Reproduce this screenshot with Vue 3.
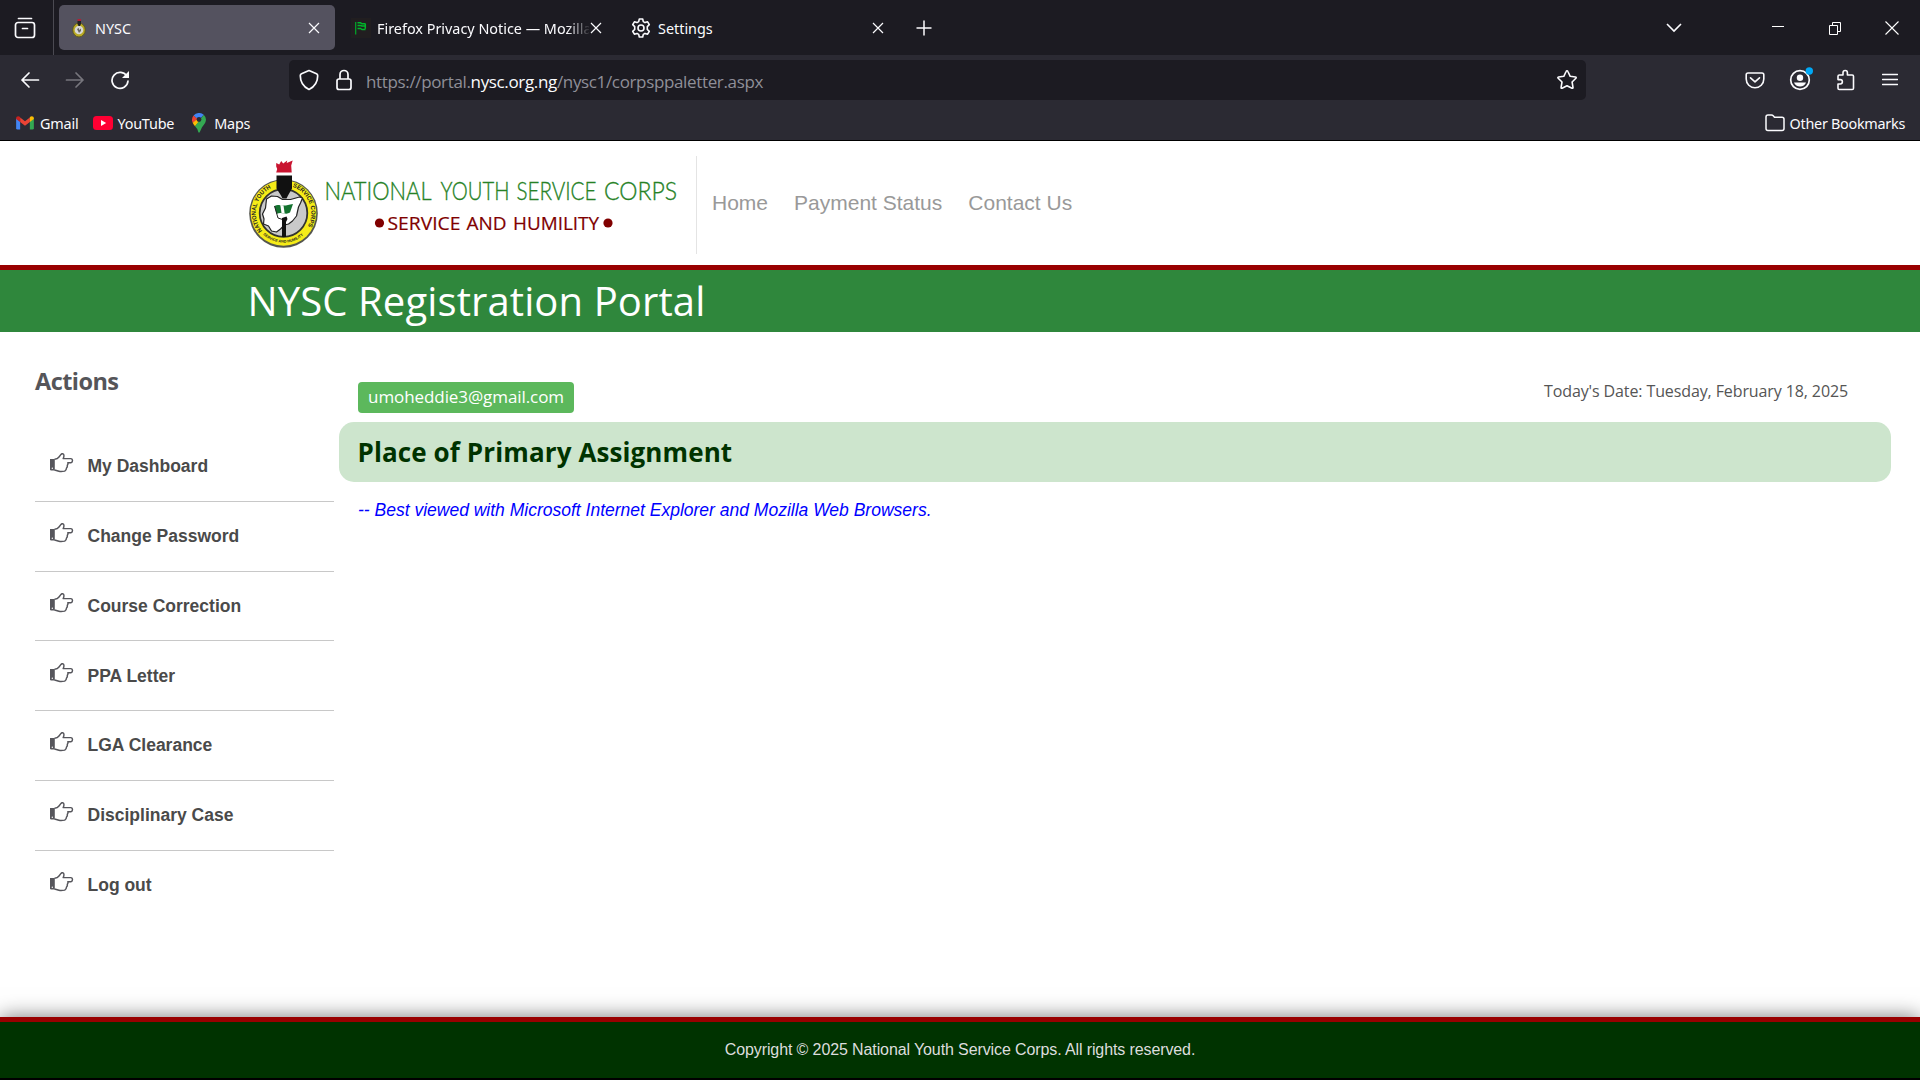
<script setup>
const actions = ['My Dashboard', 'Change Password', 'Course Correction', 'PPA Letter', 'LGA Clearance', 'Disciplinary Case', 'Log out']
const links = ['Home', 'Payment Status', 'Contact Us']
</script>

<template>
  <div class="screen">
    <div class="tabbar">
      <div class="view"><svg width="22" height="22" viewBox="0 0 22 22" fill="none" stroke="#fbfbfe" stroke-width="1.7" stroke-linecap="round"><path d="M4.500 1.500h13" /><rect x="1.500" y="5.500" width="19" height="15" rx="2.500" /><path d="M8.500 11.500h5" /></svg></div>
      <div class="tab active">
        <svg class="fav" width="16" height="20" viewBox="0 0 16 20"><ellipse cx="8" cy="12" rx="6.300" ry="7" fill="#b9aa25" stroke="#5d581f" /><circle cx="8" cy="12" r="4.300" fill="#d8d8d5" /><path d="M6.500 3h3.500v3l-1 2H7.500l-1-2z" fill="#222" /><path d="M6.500 1h3.500v2H6.500z" fill="#b21f35" /><path d="M6 11l2-1v2l2-1.500v2.500l-2 2z" fill="#666" /></svg>
        <span class="tt">NYSC</span>
        <svg class="x" width="12" height="12" viewBox="0 0 12 12"><path d="M1 1l10 10M11 1L1 11" /></svg>
      </div>
      <div class="tab second">
        <svg class="fav" width="20" height="20" viewBox="0 0 20 20"><path d="M0 0h20v20H0z" fill="#211e20" /><path d="M4.700 4v12.500" stroke="#00a82a" stroke-width="1.200" /><path d="M6.500 4.800h3l1.500 1h3.500M6.500 7.500h3l1.500.5h3M6.500 10.500h3l1.500 1h3.500M14.300 5.800v5" fill="none" stroke="#00b52a" stroke-width="1.500" /></svg>
        <span class="tt fade">Firefox Privacy Notice — Mozilla</span>
        <svg class="x" width="12" height="12" viewBox="0 0 12 12"><path d="M1 1l10 10M11 1L1 11" /></svg>
      </div>
      <div class="tab third">
        <svg class="fav" width="20" height="20" viewBox="0 0 20 20" fill="none" stroke="#fbfbfe" stroke-width="1.600" stroke-linejoin="round"><path d="M8.300 1h3.400l.6 2.600 1.700 1 2.600-.8 1.700 2.900-2 1.900v2.800l2 1.900-1.700 2.900-2.600-.8-1.700 1-.6 2.600H8.300l-.6-2.600-1.700-1-2.600.8-1.700-2.900 2-1.900V8.600l-2-1.900 1.700-2.900 2.600.8 1.700-1z" /><circle cx="10" cy="10" r="3" /></svg>
        <span class="tt">Settings</span>
        <svg class="x" width="12" height="12" viewBox="0 0 12 12"><path d="M1 1l10 10M11 1L1 11" /></svg>
      </div>
      <svg class="plus" width="16" height="16" viewBox="0 0 16 16"><path d="M8 .5v15M.5 8h15" stroke="#fbfbfe" stroke-width="1.500" /></svg>
      <svg class="chev" width="18" height="12" viewBox="0 0 18 12"><path d="M2 2l7 7 7-7" fill="none" stroke="#fbfbfe" stroke-width="1.600" /></svg>
      <div class="win">
        <svg width="14" height="14" viewBox="0 0 14 14"><path d="M1 5.500h12" stroke="#fff" /></svg>
        <svg width="14" height="14" viewBox="0 0 14 14" fill="none" stroke="#fff"><path d="M1.500 4.500h8v9h-8zM4.500 4.500v-3h8v9h-3" /></svg>
        <svg width="14" height="14" viewBox="0 0 14 14"><path d="M.5.500l13 13M13.500.500l-13 13" stroke="#fff" stroke-width="1.100" /></svg>
      </div>
    </div>
    <div class="toolbar">
      <svg class="back" width="20" height="18" viewBox="0 0 20 18"><path d="M18.500 9H2M9 2L2 9l7 7" fill="none" stroke="#fbfbfe" stroke-width="1.700" stroke-linecap="round" stroke-linejoin="round" /></svg>
      <svg class="fwd" width="20" height="18" viewBox="0 0 20 18"><path d="M1.500 9H18M11 2l7 7-7 7" fill="none" stroke="#77767d" stroke-width="1.700" stroke-linecap="round" stroke-linejoin="round" /></svg>
      <svg class="rel" width="20" height="20" viewBox="0 0 20 20"><path d="M17 6.500A8 8 0 1 0 18 11" fill="none" stroke="#fbfbfe" stroke-width="1.700" stroke-linecap="round" /><path d="M19 1v7h-7z" fill="#fbfbfe" /></svg>
      <div class="url">
        <svg width="20" height="22" viewBox="0 0 20 22"><path d="M10 1.500l7.500 3.200q1.200.5 1.200 2C18.700 14 15 18 10 20.500 5 18 1.300 14 1.300 6.700q0-1.500 1.200-2z" fill="none" stroke="#fbfbfe" stroke-width="1.700" stroke-linejoin="round" /></svg>
        <svg class="lock" width="16" height="22" viewBox="0 0 16 22"><path d="M4 10V5.500a4 4 0 0 1 8 0V10" fill="none" stroke="#fbfbfe" stroke-width="1.700" /><rect x="1" y="10" width="14" height="10.500" rx="2" fill="none" stroke="#fbfbfe" stroke-width="1.700" /></svg>
        <span class="addr">https://portal.<b>nysc.org.ng</b>/nysc1/corpsppaletter.aspx</span>
        <svg class="star" width="22" height="22" viewBox="0 0 22 22"><path d="M11 1.800q.6 0 .9.700l2.300 4.800 5.200.7q1.300.3.500 1.300l-3.800 3.700.9 5.300q.1 1.300-1 .9L11 16.700l-4.900 2.500q-1.200.4-1-.9l.9-5.300L2.200 9.300Q1.300 8.300 2.600 8l5.200-.7 2.300-4.800q.3-.7.900-.7z" fill="none" stroke="#fbfbfe" stroke-width="1.600" stroke-linejoin="round" /></svg>
      </div>
      <div class="tools">
        <svg width="22" height="22" viewBox="0 0 22 22" fill="none" stroke="#fbfbfe" stroke-width="1.600" stroke-linecap="round" stroke-linejoin="round"><path d="M4 4h14q1.800 0 1.800 1.800V10a8.800 8.800 0 0 1-17.600 0V5.800Q2.200 4 4 4z" /><path d="M6.500 8.800l4.500 4 4.500-4" /></svg>
        <svg width="26" height="26" viewBox="0 0 26 26"><circle cx="13" cy="13" r="9.300" fill="none" stroke="#fbfbfe" stroke-width="1.700" /><circle cx="13" cy="10.800" r="3.200" fill="#fbfbfe" /><path d="M7 15.500h12q-1.600 4-6 4t-6-4z" fill="#fbfbfe" /><circle cx="22.300" cy="4" r="3.700" fill="#00a8f5" /></svg>
        <svg class="ext" width="20" height="22" viewBox="0 0 20 22"><path d="M7 6V3.700a2.200 2.200 0 0 1 4.400 0V6h4.800q1.300 0 1.300 1.300v11.900q0 1.300-1.300 1.300H3.300Q2 20.500 2 19.200V15h2.200a2.200 2.200 0 0 0 0-4.400H2V7.300Q2 6 3.300 6z" fill="none" stroke="#fbfbfe" stroke-width="1.600" stroke-linejoin="round" /></svg>
        <svg class="menu" width="16" height="14" viewBox="0 0 16 14"><path d="M.5 1.500h15M.5 6.500h15M.5 11.500h15" stroke="#fbfbfe" stroke-width="1.500" stroke-linecap="round" /></svg>
      </div>
    </div>
    <div class="bookmarks">
      <div class="bm gmail">
        <svg width="18" height="14" viewBox="0 0 19 15"><path d="M0 2.500L4.300 6v8.500H1.500Q0 14.500 0 13z" fill="#4285f4" /><path d="M14.700 6L19 2.500V13q0 1.500-1.500 1.500h-2.800z" fill="#34a853" /><path d="M4.300 1.500l5.200 4 5.200-4V6.500l-5.200 4-5.200-4z" fill="#ea4335" /><path d="M0 2.500C0 .2 2.500-.4 4.300 1.200v5.200L0 3.200z" fill="#c5221f" /><path d="M19 2.500c0-2.300-2.500-2.900-4.300-1.300v5.200L19 3.200z" fill="#fbbc04" /></svg>
        <span>Gmail</span>
      </div>
      <div class="bm youtube">
        <svg width="20" height="14" viewBox="0 0 20 14"><rect width="20" height="14" rx="3.500" fill="#ff0033" /><path d="M8 4l5.200 3L8 10z" fill="#fff" /></svg>
        <span>YouTube</span>
      </div>
      <div class="bm maps">
        <svg width="14" height="20" viewBox="0 0 14 20"><path d="M1.600 2.500A7 7 0 0 0 .7 9.800L7 7z" fill="#ea4335" /><path d="M.7 9.800q.8 1.800 2.300 3.500L9 7 7 5z" fill="#fbbc04" /><path d="M11.700 1.800q3.600 3.500 1.500 8-1.200 2-3.200 4.500L7.800 19q-.8 1.500-1.500 0-.8-3.500-3.300-5.700z" fill="#34a853" /><path d="M1.600 2.500A7 7 0 0 1 11.700 1.800L7 7z" fill="#4285f4" /><circle cx="7" cy="6.500" r="2.400" fill="#2b2a33" /></svg>
        <span>Maps</span>
      </div>
      <div class="bm other">
        <svg width="20" height="18" viewBox="0 0 20 18"><path d="M1 14.500V3Q1 1 3 1h3.500q1 0 1.700.8L9.500 3.300H17q2 0 2 2v9.200q0 2-2 2H3q-2 0-2-2z" fill="none" stroke="#fbfbfe" stroke-width="1.500" /></svg>
        <span>Other Bookmarks</span>
      </div>
    </div>
    <header class="head">
      <svg class="logo" width="440" height="100" viewBox="246 156 440 100">
        <circle cx="283.500" cy="213.500" r="34.300" fill="#55564f" />
        <circle cx="283.500" cy="213" r="32.800" fill="#f6ec18" />
        <circle cx="283.500" cy="213" r="23.800" fill="#c9c9c9" stroke="#33332f" stroke-width="1.800" />
        <path id="ringLeft" d="M262.300 230.800A27.700 27.700 0 0 1 275 186.600" fill="none" />
        <path id="ringRight" d="M292.500 186.800A27.700 27.700 0 0 1 304.700 230.800" fill="none" />
        <path id="ringLow" d="M261 232.500A30 30 0 0 0 306 232.500" fill="none" />
        <text class="ringt"><textPath href="#ringLeft" textLength="50" lengthAdjust="spacingAndGlyphs">NATIONAL YOUTH</textPath></text>
        <text class="ringt"><textPath href="#ringRight" textLength="48" lengthAdjust="spacingAndGlyphs">SERVICE CORPS</textPath></text>
        <text class="ringt low"><textPath href="#ringLow" startOffset="3" textLength="44" lengthAdjust="spacingAndGlyphs">SERVICE AND HUMILITY</textPath></text>
        <path d="M266.500 199l5-3 6 .5 5 3 8 0 9-2.500 3 1-2 5-2 4-2 9-4 5-4 3-4 1-4 4-4 3-5-1-3-5-5-2 .5-5-1.500-5 3-6z" fill="#fff" stroke="#222" stroke-width="1.200" stroke-linejoin="round" />
        <path d="M274.500 206q2.500-1.500 4.500-1t4.500.5 4.500-.5 5-1l-3 8.500q-2.500 1.500-5 1t-4.500-.5-4 1z" fill="#14722f" />
        <path d="M280.300 205l3.200.5 1.200 8-3.200-.5z" fill="#fff" />
        <path d="M274.500 206l3.500 12 6 2" fill="none" stroke="#222" />
        <path d="M282 218l4.500-1.500 1 2.500-1.500 3V237h-4v-15z" fill="#111" />
        <path d="M276.500 175.500h15.500v13l-4 7-1.500 3h-4l-1.500-3-4.500-7z" fill="#111" />
        <path d="M276.200 163l3 1.500 2-3.500 2 2.500 4-3-.5 2.500 6-2.500-1.500 5 .5 7h-15.500l1-3.500-1-2.500z" fill="#c91430" />
        <text class="name" y="200"><tspan x="324.500" textLength="107" lengthAdjust="spacingAndGlyphs">NATIONAL</tspan><tspan x="440.500" textLength="69" lengthAdjust="spacingAndGlyphs">YOUTH</tspan><tspan x="516.500" textLength="80" lengthAdjust="spacingAndGlyphs">SERVICE</tspan><tspan x="604" textLength="73" lengthAdjust="spacingAndGlyphs">CORPS</tspan></text>
        <circle cx="379.500" cy="223" r="4.600" fill="#800000" />
        <text class="motto" y="230"><tspan x="387.500" textLength="73" lengthAdjust="spacingAndGlyphs">SERVICE</tspan><tspan x="466.500" textLength="40" lengthAdjust="spacingAndGlyphs">AND</tspan><tspan x="513" textLength="86" lengthAdjust="spacingAndGlyphs">HUMILITY</tspan></text>
        <circle cx="608" cy="223" r="4.600" fill="#800000" />
      </svg>
      <nav><a v-for="l in links" :key="l">{{ l }}</a></nav>
    </header>
    <div class="banner">NYSC Registration Portal</div>
    <main>
      <aside>
        <h3>Actions</h3>
        <ul>
          <li v-for="a in actions" :key="a">
            <svg width="24" height="20" viewBox="0 0 24 20"><path d="M0 6h4.800v11.500H1.200Q0 17.500 0 16.300z" fill="#56565c" /><circle cx="2.300" cy="15.200" r=".7" fill="#fff" /><path d="M4.500 6.300Q7.500 6 9 4L11 1.400q1.200-1.300 2.500-.2 1 1.500-.3 4.400H21q1.500.2 1.500 2t-1.500 2.100h-3.200q.5 1.500-.5 2.600.3 1.700-.8 2.700 0 2-1.800 3.100-3.500.8-5.700.2L4.500 17" fill="none" stroke="#56565c" stroke-width="1.450" stroke-linejoin="round" /></svg>
            <span>{{ a }}</span>
          </li>
        </ul>
      </aside>
      <section>
        <div class="row"><span class="badge">umoheddie3@gmail.com</span><span class="date">Today's Date: Tuesday, February 18, 2025</span></div>
        <h2>Place of Primary Assignment</h2>
        <p>-- Best viewed with Microsoft Internet Explorer and Mozilla Web Browsers.</p>
      </section>
    </main>
    <footer>Copyright © 2025 National Youth Service Corps. All rights reserved.</footer>
  </div>
</template>

<style>
body { margin: 0; background: #fff; }
</style>
<style scoped>
.screen { width: 1920px; height: 1080px; display: flex; flex-direction: column; overflow: hidden; background: #fff; font-family: "Open Sans", sans-serif; }
svg { display: block; flex: none; }
span, a { white-space: nowrap; }
.tabbar { height: 55px; background: #1c1b22; display: flex; align-items: center; color: #fbfbfe; flex: none; }
.view { width: 54px; height: 55px; border-right: 1px solid #4b4a52; padding-left: 14px; box-sizing: border-box; display: flex; align-items: center; }
.tab { height: 45px; display: flex; align-items: center; box-sizing: border-box; border-radius: 5px; flex: none; font-family: "Noto Sans", sans-serif; font-size: 14.400px; }
.active { margin-left: 5px; width: 276px; background: #54525f; padding: 0 15px 0 12px; }
.second { width: 278px; padding: 0 11px 0 16px; }
.third { width: 278px; padding: 0 7px 0 18px; }
.tt { margin-left: 7px; margin-right: auto; padding-top: 2px; }
.active .tt { margin-left: 8px; }
.second .tt { margin-left: 6px; }
.fade { width: 212px; overflow: hidden; mask-image: linear-gradient(to right, #000 190px, transparent 214px); }
.x path { stroke: #fbfbfe; stroke-width: 1.2; }
.plus { margin-left: 25px; }
.chev { margin-left: auto; }
.win { display: flex; gap: 43px; margin-left: 88px; margin-right: 21px; }
.toolbar { height: 50px; background: #2b2a33; display: flex; align-items: center; flex: none; }
.back { margin-left: 20px; }
.fwd { margin-left: 25px; }
.rel { margin-left: 25px; }
.url { margin-left: 159px; width: 1297px; height: 40px; border-radius: 5px; background: #1c1b22; display: flex; align-items: center; padding: 0 8px 0 10px; box-sizing: border-box; color: #8f8f98; font-size: 17px; letter-spacing: -.35px; }
.url b { font-weight: 400; color: #fbfbfe; }
.lock { margin-left: 17px; }
.addr { margin-left: 14px; padding-top: 2px; }
.star { margin-left: auto; }
.tools { display: flex; align-items: center; margin-left: 158px; gap: 21px; }
.ext { margin-left: 2px; }
.menu { margin-left: 5px; }
.bookmarks { height: 36px; box-sizing: border-box; background: #2b2a33; border-bottom: 1px solid #000; display: flex; align-items: center; color: #fbfbfe; font-family: "Noto Sans", sans-serif; font-size: 14.400px; letter-spacing: -.2px; padding: 0 15px 0 16px; flex: none; }
.bm { display: flex; align-items: center; gap: 6px; }
.bm span { padding-top: 2px; }
.youtube { margin-left: 15px; gap: 4px; }
.maps { margin-left: 18px; gap: 8px; }
.other { margin-left: auto; gap: 5px; }
.other span { letter-spacing: -.28px; }
.head { height: 124px; display: flex; flex: none; border-bottom: 5px solid #900; }
.logo { margin: 15px 0 0 246px; }
.ringt { font: 700 6px "Liberation Sans", sans-serif; fill: #222; }
.low { font-size: 3.800px; }
.name { font: 300 25.500px Lato, sans-serif; fill: #268226; stroke: #268226; stroke-width: .35px; }
.motto { font: 500 18.500px "Open Sans", sans-serif; fill: #800000; stroke: #800000; stroke-width: .2px; }
nav { margin: 15px 0 0 10px; height: 98px; box-sizing: border-box; border-left: 1px solid #e4e4e4; padding: 0 0 5px 15px; display: flex; gap: 26px; align-items: center; font: 21px "Liberation Sans", sans-serif; color: #999; }
.banner { height: 62px; background: #2f873c; color: #fff; font-size: 40px; line-height: 62px; letter-spacing: .11px; padding-left: 247.500px; box-sizing: border-box; flex: none; }
main { display: flex; flex: 1; }
aside { width: 299px; margin-left: 35px; }
h3 { margin: 31px 0 0; font-size: 23.500px; line-height: 36px; letter-spacing: -.55px; color: #555559; font-weight: 700; }
ul { list-style: none; margin: 33px 0 0; padding: 0; }
li { height: 69.750px; box-sizing: border-box; border-bottom: 1px solid #c8c8c8; display: flex; align-items: center; padding-left: 15px; font: 700 17.500px "Liberation Sans", sans-serif; color: #4a4a4a; }
li:last-child { border: 0; }
li svg { margin-bottom: 6px; }
li span { margin-left: 13.500px; padding-top: 1px; }
section { flex: 1; margin: 50px 29px 0 5px; }
.row { display: flex; justify-content: space-between; padding: 0 43px 0 19px; height: 40px; }
.badge { width: 216px; height: 31px; background: #5cb85c; border-radius: 4px; color: #fff; text-align: center; font-size: 17px; line-height: 29px; letter-spacing: -.08px; }
.date { font-size: 16px; line-height: 18px; color: #555; letter-spacing: -.11px; }
h2 { margin: 0; height: 60px; border-radius: 15px; background: #cde5cd; color: #030; font-size: 26px; line-height: 60px; padding-left: 18.500px; letter-spacing: .11px; }
p { margin: 18px 0 0 19px; font: italic 17.500px/20px "Liberation Sans", sans-serif; color: #00f; }
footer { height: 63px; box-sizing: border-box; border-top: 5px solid #900; border-bottom: 2px solid #000; background: #030; color: #ddd; text-align: center; font: 16px/55px "Liberation Sans", sans-serif; letter-spacing: -.11px; box-shadow: 0 0 20px #777; flex: none; }
</style>
